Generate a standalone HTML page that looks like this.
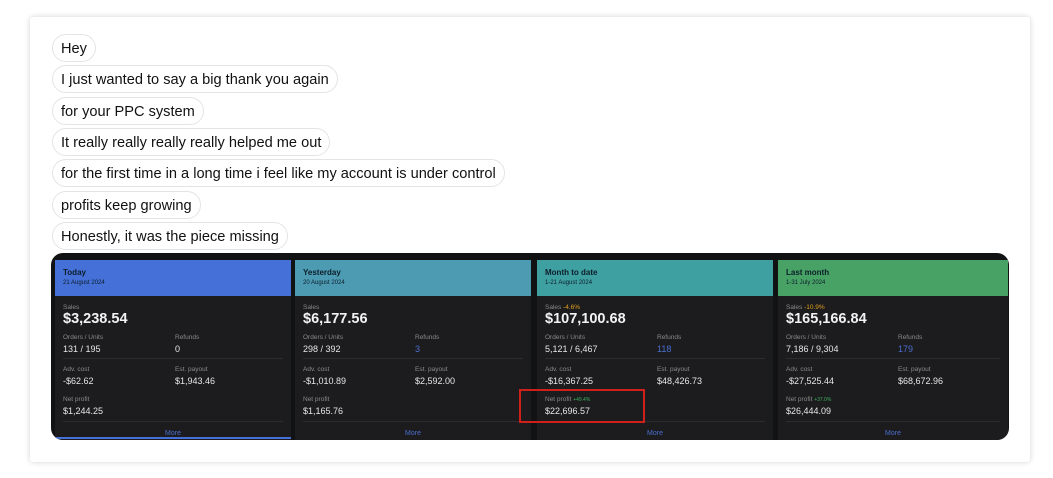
<!DOCTYPE html><html><head><style>
body{margin:0;width:1053px;height:478px;background:#fff;font-family:"Liberation Sans",sans-serif;position:relative;overflow:hidden}
.card{position:absolute;left:30px;top:17px;width:1000px;height:445px;background:#fff;box-shadow:0 0 6px rgba(0,0,0,.18);border-radius:3px}
.b{position:absolute;left:52px;height:28px;line-height:28px;padding:0 8px;border:1px solid #e4e4e4;border-radius:14px;font-size:14.6px;color:#111;box-sizing:border-box;background:#fff}
.dash{position:absolute;left:51px;top:253px;width:958px;height:187px;background:#111214;border-radius:12px;overflow:hidden}
.col{position:absolute;top:7px;height:180px;background:#1c1c1e}
.hd{height:36px;padding:8px 8px 0;box-sizing:border-box;color:#0c1e2a;font-size:8px;font-weight:bold}
.hd i{display:block;font-style:normal;font-weight:normal;font-size:6px;margin-top:3px}
.l{position:absolute;font-size:6.5px;color:#8a8a8a}
.v{position:absolute;font-size:9px;color:#e6e6e6}
.big{position:absolute;font-size:14.5px;font-weight:bold;color:#f2f2f2}
.sep{position:absolute;left:8px;right:8px;height:1px;background:#2c2c2e}
.more{position:absolute;width:100%;top:170px;text-align:center;font-size:7px;color:#4b6fd0}
</style></head><body>
<div class="card"></div>
<div class="b" style="top:34px">Hey</div>
<div class="b" style="top:65px">I just wanted to say a big thank you again</div>
<div class="b" style="top:97px">for your PPC system</div>
<div class="b" style="top:128px">It really really really really helped me out</div>
<div class="b" style="top:159px">for the first time in a long time i feel like my account is under control</div>
<div class="b" style="top:191px">profits keep growing</div>
<div class="b" style="top:222px">Honestly, it was the piece missing</div>
<div class="dash">
<div class="col" style="left:4px;width:236px"><div class="hd" style="background:#4470d8">Today<i>21 August 2024</i></div>
<div class="l" style="left:8px;top:44px">Sales</div><div class="big" style="left:8px;top:51px">$3,238.54</div>
<div class="l" style="left:8px;top:74px">Orders / Units</div><div class="v" style="left:8px;top:84px">131 / 195</div>
<div class="l" style="left:120px;top:74px">Refunds</div><div class="v" style="left:120px;top:84px">0</div>
<div class="sep" style="top:98px"></div>
<div class="l" style="left:8px;top:106px">Adv. cost</div><div class="v" style="left:8px;top:116px">-$62.62</div>
<div class="l" style="left:120px;top:106px">Est. payout</div><div class="v" style="left:120px;top:116px">$1,943.46</div>
<div class="l" style="left:8px;top:136px">Net profit</div><div class="v" style="left:8px;top:146px">$1,244.25</div>
<div class="sep" style="top:161px"></div><div class="more">More</div>
<div style="position:absolute;left:0;right:0;top:177px;height:2px;background:#4470d8"></div></div>
<div class="col" style="left:244px;width:236px"><div class="hd" style="background:#4d9bb2">Yesterday<i>20 August 2024</i></div>
<div class="l" style="left:8px;top:44px">Sales</div><div class="big" style="left:8px;top:51px">$6,177.56</div>
<div class="l" style="left:8px;top:74px">Orders / Units</div><div class="v" style="left:8px;top:84px">298 / 392</div>
<div class="l" style="left:120px;top:74px">Refunds</div><div class="v" style="left:120px;top:84px;color:#4b6fd0">3</div>
<div class="sep" style="top:98px"></div>
<div class="l" style="left:8px;top:106px">Adv. cost</div><div class="v" style="left:8px;top:116px">-$1,010.89</div>
<div class="l" style="left:120px;top:106px">Est. payout</div><div class="v" style="left:120px;top:116px">$2,592.00</div>
<div class="l" style="left:8px;top:136px">Net profit</div><div class="v" style="left:8px;top:146px">$1,165.76</div>
<div class="sep" style="top:161px"></div><div class="more">More</div></div>
<div class="col" style="left:486px;width:236px"><div class="hd" style="background:#3fa0a2">Month to date<i>1-21 August 2024</i></div>
<div class="l" style="left:8px;top:44px">Sales <span style="color:#e0a020">-4.6%</span></div><div class="big" style="left:8px;top:51px">$107,100.68</div>
<div class="l" style="left:8px;top:74px">Orders / Units</div><div class="v" style="left:8px;top:84px">5,121 / 6,467</div>
<div class="l" style="left:120px;top:74px">Refunds</div><div class="v" style="left:120px;top:84px;color:#4b6fd0">118</div>
<div class="sep" style="top:98px"></div>
<div class="l" style="left:8px;top:106px">Adv. cost</div><div class="v" style="left:8px;top:116px">-$16,367.25</div>
<div class="l" style="left:120px;top:106px">Est. payout</div><div class="v" style="left:120px;top:116px">$48,426.73</div>
<div class="l" style="left:8px;top:136px">Net profit <span style="color:#3cb060;font-size:5px">+49.4%</span></div><div class="v" style="left:8px;top:146px">$22,696.57</div>
<div class="sep" style="top:161px"></div><div class="more">More</div></div>
<div class="col" style="left:727px;width:230px"><div class="hd" style="background:#48a266">Last month<i>1-31 July 2024</i></div>
<div class="l" style="left:8px;top:44px">Sales <span style="color:#e0a020">-10.9%</span></div><div class="big" style="left:8px;top:51px">$165,166.84</div>
<div class="l" style="left:8px;top:74px">Orders / Units</div><div class="v" style="left:8px;top:84px">7,186 / 9,304</div>
<div class="l" style="left:120px;top:74px">Refunds</div><div class="v" style="left:120px;top:84px;color:#4b6fd0">179</div>
<div class="sep" style="top:98px"></div>
<div class="l" style="left:8px;top:106px">Adv. cost</div><div class="v" style="left:8px;top:116px">-$27,525.44</div>
<div class="l" style="left:120px;top:106px">Est. payout</div><div class="v" style="left:120px;top:116px">$68,672.96</div>
<div class="l" style="left:8px;top:136px">Net profit <span style="color:#3cb060;font-size:5px">+37.0%</span></div><div class="v" style="left:8px;top:146px">$26,444.09</div>
<div class="sep" style="top:161px"></div><div class="more">More</div></div>
</div>
<div style="position:absolute;left:519px;top:389px;width:126px;height:34px;border:2px solid #d0201c;box-sizing:border-box"></div>
</body></html>
